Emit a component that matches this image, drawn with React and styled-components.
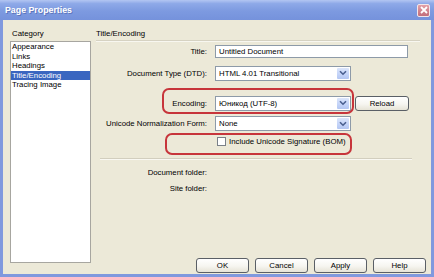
import React from "react";
import styled, { createGlobalStyle } from "styled-components";

const Global = createGlobalStyle`
  html, body { margin: 0; padding: 0; background: #ece9d8; }
  body { font-family: "Liberation Sans", Arial, sans-serif; font-size: 7.8px; color: #000000; }
`;

const Window = styled.div`
  width: 434px;
  height: 277px;
  display: flex;
  flex-direction: column;
  overflow: hidden;
`;

const TitleBar = styled.div`
  height: 20px;
  flex: none;
  display: flex;
  align-items: center;
  justify-content: space-between;
  padding: 0 4px 0 5px;
  box-sizing: border-box;
  background: linear-gradient(180deg, #b3c6f2 0%, #8ea9e8 18%, #7d9ae0 55%, #7592dc 100%);
`;

const TitleText = styled.span`
  font-family: "Liberation Sans", Arial, sans-serif;
  font-weight: bold;
  font-size: 8.8px;
  color: #ffffff;
  text-shadow: 1px 1px 0 rgba(60, 80, 150, 0.5);
`;

const CloseButton = styled.div`
  width: 13px;
  height: 13px;
  box-sizing: border-box;
  border: 1px solid #f2e6ea;
  border-radius: 2px;
  background: linear-gradient(180deg, #e3a1a8 0%, #cf7f8a 60%, #c26f7c 100%);
  display: flex;
  align-items: center;
  justify-content: center;
`;

const Body = styled.div`
  flex: 1;
  display: flex;
  background: #ece9d8;
  border: 3px solid #8099de;
  border-top: none;
  padding: 8px 4px 0 7px;
  min-height: 0;
`;

const LeftColumn = styled.div`
  width: 81px;
  flex: none;
  display: flex;
  flex-direction: column;
  padding-bottom: 11px;
`;

const SectionLabel = styled.div`
  height: 13px;
  line-height: 11px;
  padding-left: ${(p) => p.$indent || 0}px;
  white-space: nowrap;
`;

const ListBox = styled.div`
  flex: 1;
  background: #ffffff;
  border: 1px solid #a7a6a0;
`;

const ListItem = styled.div`
  height: 9.5px;
  line-height: 9.5px;
  padding-left: 1px;
  white-space: nowrap;
  background: ${(p) => (p.$selected ? "#3a66c0" : "transparent")};
  color: ${(p) => (p.$selected ? "#ffffff" : "#000000")};
`;

const RightColumn = styled.div`
  position: relative;
  flex: 1;
  margin-left: 5px;
  display: flex;
  flex-direction: column;
  padding-bottom: 1px;
`;

const Header = styled.div`
  height: 12px;
  line-height: 11px;
  border-bottom: 1px solid #d6d2c2;
  margin-right: 7px;
  box-shadow: 0 1px 0 #f8f7f0;
`;

const Row = styled.div`
  display: grid;
  grid-template-columns: 111px 1fr;
  column-gap: ${(p) => p.$gap ?? 8}px;
  align-items: center;
  height: ${(p) => p.$h}px;
  margin-top: ${(p) => p.$mt}px;
`;

const Label = styled.div`
  text-align: right;
  white-space: nowrap;
`;

const Field = styled.div`
  display: flex;
  align-items: center;
  gap: 4px;
`;

const TextInput = styled.div`
  width: 193px;
  height: 13px;
  box-sizing: border-box;
  border: 1px solid #8d9aa8;
  background: #ffffff;
  padding-left: 3px;
  line-height: 11px;
  white-space: nowrap;
`;

const Select = styled.div`
  width: ${(p) => p.$w || 136}px;
  height: ${(p) => p.$h || 15}px;
  box-sizing: border-box;
  border: 1px solid #8d9aa8;
  background: #ffffff;
  display: flex;
  align-items: center;
  justify-content: space-between;
  padding: 1px 1px 1px 3px;
`;

const SelectValue = styled.span`
  white-space: nowrap;
`;

const ArrowBox = styled.div`
  width: 12px;
  height: 100%;
  box-sizing: border-box;
  border-radius: 1px;
  background: linear-gradient(180deg, #dbe5fb 0%, #c3d3f8 60%, #b3c6f2 100%);
  display: flex;
  align-items: center;
  justify-content: center;
`;

const Button = styled.div`
  width: ${(p) => p.$w || 53}px;
  height: 15px;
  box-sizing: border-box;
  border: 1px solid #5a5f66;
  border-radius: 3px;
  background: linear-gradient(180deg, #ffffff 0%, #f6f5f0 55%, #e6e3d6 100%);
  display: flex;
  align-items: center;
  justify-content: center;
  white-space: nowrap;
`;

const CheckRow = styled.div`
  display: flex;
  align-items: center;
  gap: 3px;
`;

const CheckBox = styled.div`
  width: 9px;
  height: 9px;
  box-sizing: border-box;
  border: 1px solid #7a8088;
  background: #ffffff;
`;

const Separator = styled.div`
  margin: ${(p) => p.$mt}px 15px 0 4px;
  height: 1px;
  background: #d2cebe;
  box-shadow: 0 1px 0 #f9f8f2;
`;

const Spacer = styled.div`
  flex: 1;
`;

const ButtonRow = styled.div`
  display: flex;
  justify-content: flex-end;
  gap: 6px;
  padding-right: 1px;
`;

const Annotation = styled.div`
  position: absolute;
  left: ${(p) => p.$x}px;
  top: ${(p) => p.$y}px;
  width: ${(p) => p.$w}px;
  height: ${(p) => p.$h}px;
  box-sizing: border-box;
  border: 2px solid #c7353b;
  border-radius: 7px;
  pointer-events: none;
`;

const Chevron = () => (
  <svg width="8" height="6" viewBox="0 0 8 6">
    <path d="M1 1.2 L4 4.2 L7 1.2" fill="none" stroke="#4a5f8f" strokeWidth="1.6" />
  </svg>
);

const CloseX = () => (
  <svg width="8" height="8" viewBox="0 0 8 8">
    <path d="M1 1 L7 7 M7 1 L1 7" stroke="#ffffff" strokeWidth="1.8" />
  </svg>
);

const categories = ["Appearance", "Links", "Headings", "Title/Encoding", "Tracing Image"];

export default function App() {
  return (
    <>
      <Global />
      <Window>
        <TitleBar>
          <TitleText>Page Properties</TitleText>
          <CloseButton>
            <CloseX />
          </CloseButton>
        </TitleBar>
        <Body>
          <LeftColumn>
            <SectionLabel $indent={2}>Category</SectionLabel>
            <ListBox>
              {categories.map((c) => (
                <ListItem key={c} $selected={c === "Title/Encoding"}>
                  {c}
                </ListItem>
              ))}
            </ListBox>
          </LeftColumn>
          <RightColumn>
            <Header>Title/Encoding</Header>
            <Row $h={14} $mt={3}>
              <Label>Title:</Label>
              <Field>
                <TextInput>Untitled Document</TextInput>
              </Field>
            </Row>
            <Row $h={16} $mt={7}>
              <Label>Document Type (DTD):</Label>
              <Field>
                <Select>
                  <SelectValue>HTML 4.01 Transitional</SelectValue>
                  <ArrowBox>
                    <Chevron />
                  </ArrowBox>
                </Select>
              </Field>
            </Row>
            <Row $h={16} $mt={14}>
              <Label>Encoding:</Label>
              <Field>
                <Select>
                  <SelectValue>Юникод (UTF-8)</SelectValue>
                  <ArrowBox>
                    <Chevron />
                  </ArrowBox>
                </Select>
                <Button $w={54}>Reload</Button>
              </Field>
            </Row>
            <Row $h={15} $mt={5}>
              <Label>Unicode Normalization Form:</Label>
              <Field>
                <Select>
                  <SelectValue>None</SelectValue>
                  <ArrowBox>
                    <Chevron />
                  </ArrowBox>
                </Select>
              </Field>
            </Row>
            <Row $h={14} $mt={3} $gap={10}>
              <span />
              <CheckRow>
                <CheckBox />
                <span>Include Unicode Signature (BOM)</span>
              </CheckRow>
            </Row>
            <Separator $mt={10} />
            <Row $h={14} $mt={6}>
              <Label>Document folder:</Label>
              <span />
            </Row>
            <Row $h={14} $mt={2}>
              <Label>Site folder:</Label>
              <span />
            </Row>
            <Spacer />
            <ButtonRow>
              <Button>OK</Button>
              <Button>Cancel</Button>
              <Button>Apply</Button>
              <Button>Help</Button>
            </ButtonRow>
            <Annotation $x={66} $y={60} $w={192} $h={26} />
            <Annotation $x={69} $y={105} $w={187} $h={22} />
          </RightColumn>
        </Body>
      </Window>
    </>
  );
}
